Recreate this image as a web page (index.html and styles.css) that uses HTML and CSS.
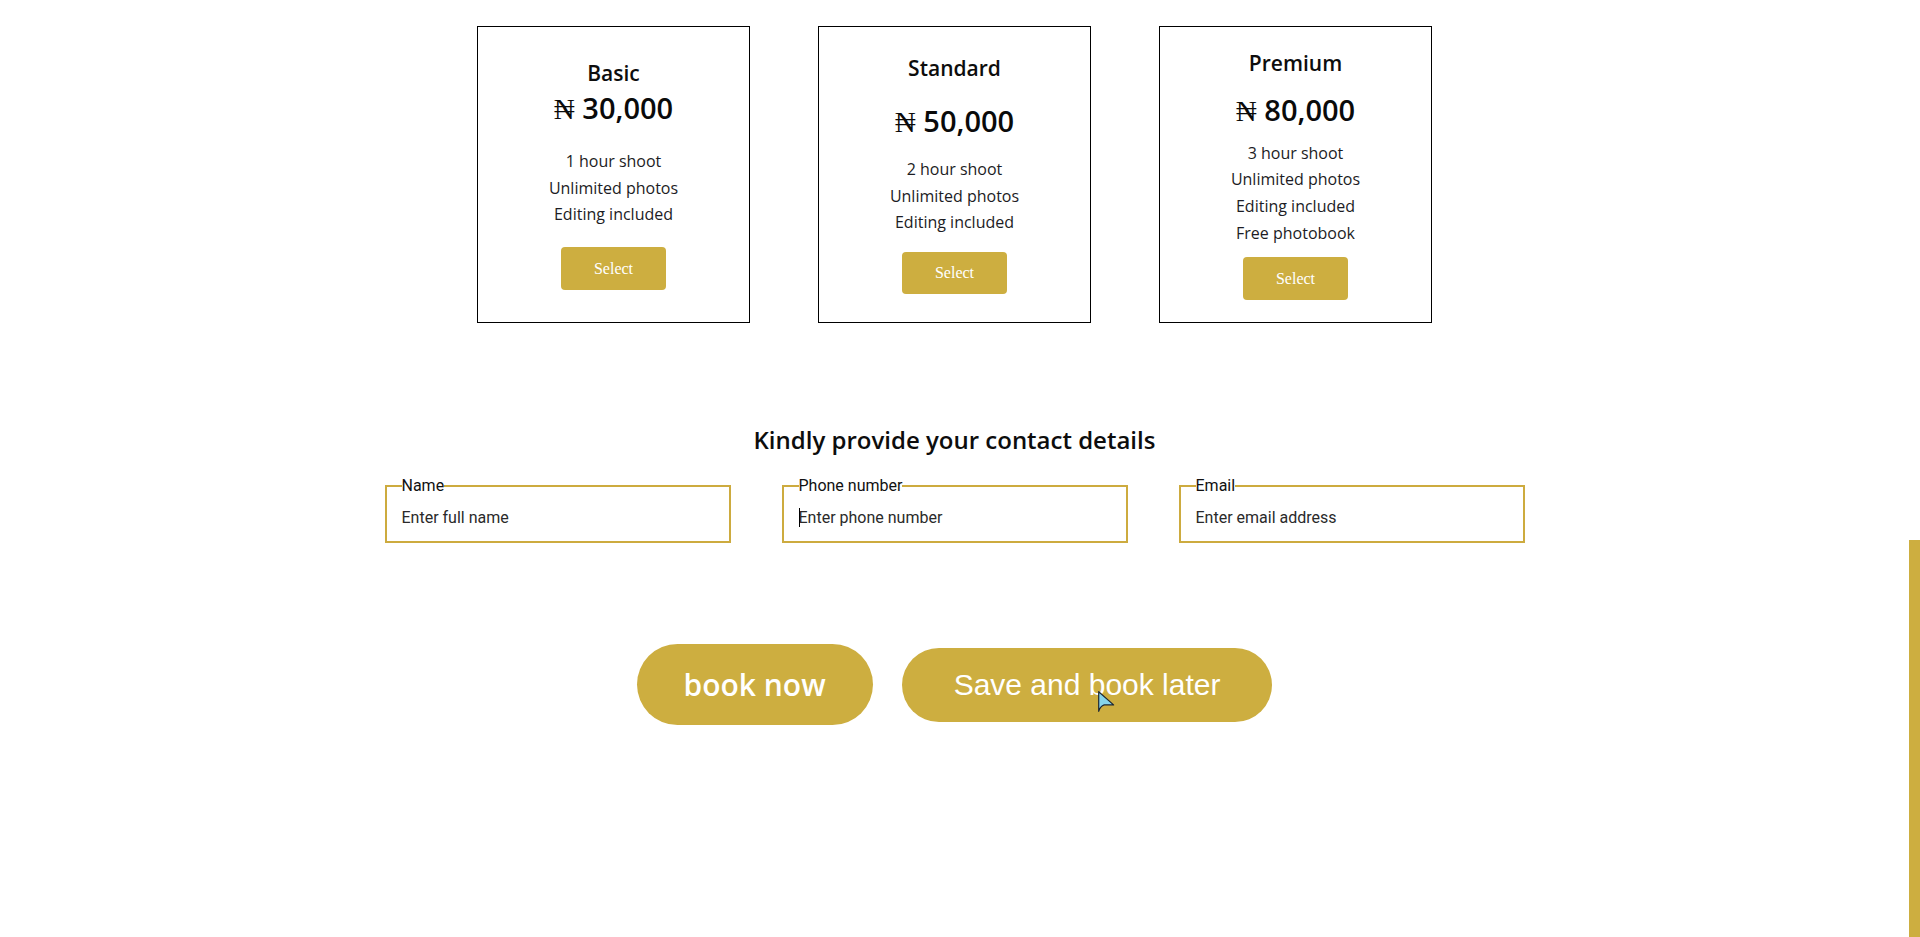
FILE: index.html
```html
<!DOCTYPE html>
<html lang="en">
<head>
<meta charset="utf-8">
<title>Book a shoot</title>
<link rel="stylesheet" href="styles.css">
</head>
<body>
<div class="page">
  <section class="plans">
    <div class="card card-basic">
      <h3 class="card-title">Basic</h3>
      <p class="card-price"><span class="naira">₦</span> 30,000</p>
      <ul class="features">
        <li>1 hour shoot</li>
        <li>Unlimited photos</li>
        <li>Editing included</li>
      </ul>
      <button class="select-btn">Select</button>
    </div>
    <div class="card card-standard">
      <h3 class="card-title">Standard</h3>
      <p class="card-price"><span class="naira">₦</span> 50,000</p>
      <ul class="features">
        <li>2 hour shoot</li>
        <li>Unlimited photos</li>
        <li>Editing included</li>
      </ul>
      <button class="select-btn">Select</button>
    </div>
    <div class="card card-premium">
      <h3 class="card-title">Premium</h3>
      <p class="card-price"><span class="naira">₦</span> 80,000</p>
      <ul class="features">
        <li>3 hour shoot</li>
        <li>Unlimited photos</li>
        <li>Editing included</li>
        <li>Free photobook</li>
      </ul>
      <button class="select-btn">Select</button>
    </div>
  </section>

  <section class="contact">
    <h2 class="contact-title">Kindly provide your contact details</h2>
    <div class="fields">
      <fieldset class="field">
        <legend>Name</legend>
        <div class="input-wrap">
          <input type="text" placeholder="Enter full name">
        </div>
      </fieldset>
      <fieldset class="field">
        <legend>Phone number</legend>
        <div class="input-wrap">
          <input type="tel" placeholder="Enter phone number">
          <span class="caret"></span>
        </div>
      </fieldset>
      <fieldset class="field">
        <legend>Email</legend>
        <div class="input-wrap">
          <input type="email" placeholder="Enter email address">
        </div>
      </fieldset>
    </div>
  </section>

  <div class="actions">
    <button class="btn-book">book now</button>
    <button class="btn-save">Save and book later</button>
  </div>
</div>

<div class="scroll-thumb"></div>

<svg class="cursor" width="18" height="22" viewBox="0 0 18 22">
  <path d="M0.7 0.7 L0.7 20.3 Q2.3 15.2 6.2 13.9 L15.6 13.9 Z" fill="#86d4ea" stroke="#1e2733" stroke-width="1.2" stroke-linejoin="round"/>
</svg>
</body>
</html>
```

FILE: styles.css
```css
* {
  box-sizing: border-box;
}

html, body {
  margin: 0;
  padding: 0;
  background: #ffffff;
}

body {
  font-family: "Open Sans", "Noto Sans", sans-serif;
  color: #111;
  min-height: 937px;
}

.page {
  margin-right: 11px;
}

/* Plans */
.plans {
  display: flex;
  justify-content: center;
  gap: 68px;
  padding-top: 26px;
}

.card {
  width: 273px;
  height: 297px;
  border: 1px solid #000;
  display: flex;
  flex-direction: column;
  align-items: center;
  text-align: center;
}

.card-title {
  margin: 0;
  font-family: "Open Sans", sans-serif;
  font-weight: 600;
  font-size: 21px;
  line-height: 28px;
  color: #0d0d0d;
}

.card-price {
  margin: 0;
  font-family: "Open Sans", sans-serif;
  font-weight: 600;
  font-size: 29px;
  line-height: 40px;
  color: #0a0a0a;
}

.naira {
  font-family: "Liberation Serif", "DejaVu Serif", serif;
  font-weight: 400;
}

.features {
  list-style: none;
  margin: 0;
  padding: 0;
  font-family: "Open Sans", sans-serif;
  font-size: 16px;
  line-height: 26.7px;
  color: #1c1c24;
}

.select-btn {
  width: 105px;
  height: 43px;
  border: none;
  border-radius: 4px;
  background: #cdae40;
  color: #fff;
  font-family: "Liberation Serif", "Times New Roman", serif;
  font-size: 16px;
  padding: 0;
  cursor: pointer;
}

.card-basic { padding-top: 32px; }
.card-basic .card-price { margin-top: 1px; }
.card-basic .features { margin-top: 19px; }
.card-basic .select-btn { margin-top: 19px; }

.card-standard { padding-top: 27px; }
.card-standard .card-price { margin-top: 19px; }
.card-standard .features { margin-top: 14px; }
.card-standard .select-btn { margin-top: 16px; height: 42px; }

.card-premium { padding-top: 21.5px; }
.card-premium .card-price { margin-top: 13px; }
.card-premium .features { margin-top: 9px; }
.card-premium .select-btn { margin-top: 11px; }

/* Contact */
.contact-title {
  margin: 100px 0 0;
  text-align: center;
  font-family: "Open Sans", sans-serif;
  font-weight: 600;
  font-size: 24px;
  line-height: 33px;
  color: #0d0d0d;
}

.fields {
  display: flex;
  justify-content: center;
  gap: 51px;
  margin-top: 20px;
}

.field {
  width: 346px;
  min-width: 0;
  margin: 0;
  padding: 0 15px;
  border: 2px solid #cdab3f;
}

.field legend {
  padding: 0;
  font-family: Roboto, "Liberation Sans", sans-serif;
  font-size: 16px;
  line-height: 19px;
  color: #111;
}

.input-wrap {
  position: relative;
}

.field input {
  display: block;
  width: 100%;
  border: 0;
  outline: none;
  background: transparent;
  padding: 13px 0 14px;
  font-family: Roboto, "Liberation Sans", sans-serif;
  font-size: 16px;
  color: #222;
}

.field input::placeholder {
  color: #2a2a2a;
  opacity: 1;
}

.caret {
  position: absolute;
  left: 0;
  top: 13px;
  width: 1px;
  height: 19px;
  background: #000;
}

/* Actions */
.actions {
  display: flex;
  justify-content: center;
  align-items: center;
  gap: 29px;
  margin-top: 101px;
}

.btn-book,
.btn-save {
  border: none;
  background: #cdae40;
  color: #fff;
  cursor: pointer;
}

.btn-book {
  height: 81px;
  padding: 0 47px;
  border-radius: 41px;
  font-family: "Open Sans", sans-serif;
  font-weight: 600;
  font-size: 30px;
}

.btn-save {
  height: 74px;
  padding: 0 52px;
  border-radius: 37px;
  font-family: "Liberation Sans", Arial, sans-serif;
  font-weight: 400;
  font-size: 30px;
}

/* Overlays */
.scroll-thumb {
  position: fixed;
  right: 0;
  top: 540px;
  width: 11px;
  height: 397px;
  background: #cdae40;
}

.cursor {
  position: absolute;
  left: 1098px;
  top: 691px;
  pointer-events: none;
}
```
